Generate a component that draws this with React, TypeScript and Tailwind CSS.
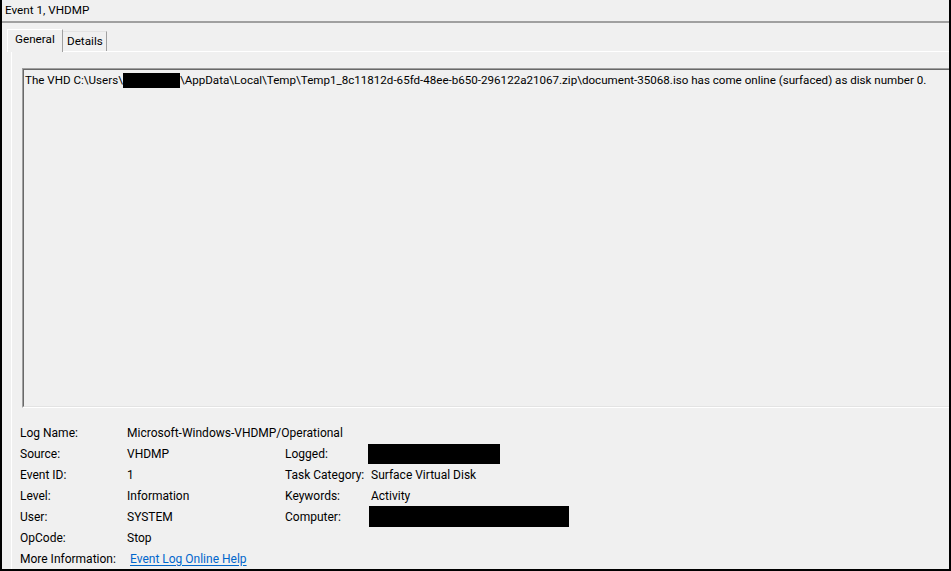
import React from "react";

function Redact({ w, h, ml = 0 }: { w: number; h: number; ml?: number }) {
  return (
    <span
      className="inline-block bg-black align-middle"
      style={{ width: w, height: h, marginLeft: ml }}
    />
  );
}

export default function App() {
  return (
    <div className="w-[951px] h-[571px] bg-[#f0f0f0] border-l-2 border-r-2 border-b-2 border-black overflow-hidden flex flex-col font-['Roboto',sans-serif] text-[11.7px] text-black leading-none">
      {/* title */}
      <div className="h-[21px] pl-[3px] flex items-center whitespace-nowrap">Event 1, VHDMP</div>
      <div className="h-[2px] bg-[#a0a0a0] shrink-0" />

      {/* tabs */}
      <div className="mt-[6px] flex items-end pl-[5px] h-[22px] shrink-0">
        <div className="relative z-10 w-[56px] h-[23px] -mb-px bg-[#f0f0f0] border-t border-l border-white border-r border-r-[#a0a0a0] flex items-start pt-[4px] pl-[7px]">
          General
        </div>
        <div className="w-[44px] h-[20px] border-t border-t-[#e3e3e3] border-r border-r-[#a0a0a0] flex items-start pt-[4px] pl-[4px]">
          Details
        </div>
      </div>

      {/* panel */}
      <div className="ml-[9px] flex-1 border-t border-l border-white flex flex-col min-h-0">
        {/* text box */}
        <div className="ml-[10px] mt-[16px] w-[960px] h-[340px] shrink-0 border-t border-l border-[#a0a0a0] border-b border-b-white">
          <div className="h-full border-t border-l border-[#696969] border-b border-b-[#e3e3e3] pl-px pt-[2px] whitespace-nowrap leading-[16px] text-[11.6px]">
            The VHD C:\Users\
            <Redact w={57} h={15} />
            \AppData\Local\Temp\Temp1_8c11812d-65fd-48ee-b650-296122a21067.zip\document-35068.iso has come online (surfaced) as disk number 0.
          </div>
        </div>

        {/* details */}
        <div className="mt-[14px] pl-[8px] grid grid-cols-[107px_158px_86px_1fr] auto-rows-[21px] items-center whitespace-nowrap text-[12px]">
          <div>Log Name:</div>
          <div className="col-span-3">Microsoft-Windows-VHDMP/Operational</div>

          <div>Source:</div>
          <div>VHDMP</div>
          <div>Logged:</div>
          <div className="flex items-center">
            <Redact w={132} h={20} ml={-3} />
          </div>

          <div>Event ID:</div>
          <div>1</div>
          <div>Task Category:</div>
          <div>Surface Virtual Disk</div>

          <div>Level:</div>
          <div>Information</div>
          <div>Keywords:</div>
          <div>Activity</div>

          <div>User:</div>
          <div>SYSTEM</div>
          <div>Computer:</div>
          <div className="flex items-center">
            <Redact w={200} h={21} ml={-2} />
          </div>

          <div>OpCode:</div>
          <div className="col-span-3">Stop</div>

          <div>More Information:</div>
          <div className="col-span-3 pl-[3px]">
            <span className="text-[#0066cc] underline underline-offset-[2px]">Event Log Online Help</span>
          </div>
        </div>
      </div>
    </div>
  );
}
